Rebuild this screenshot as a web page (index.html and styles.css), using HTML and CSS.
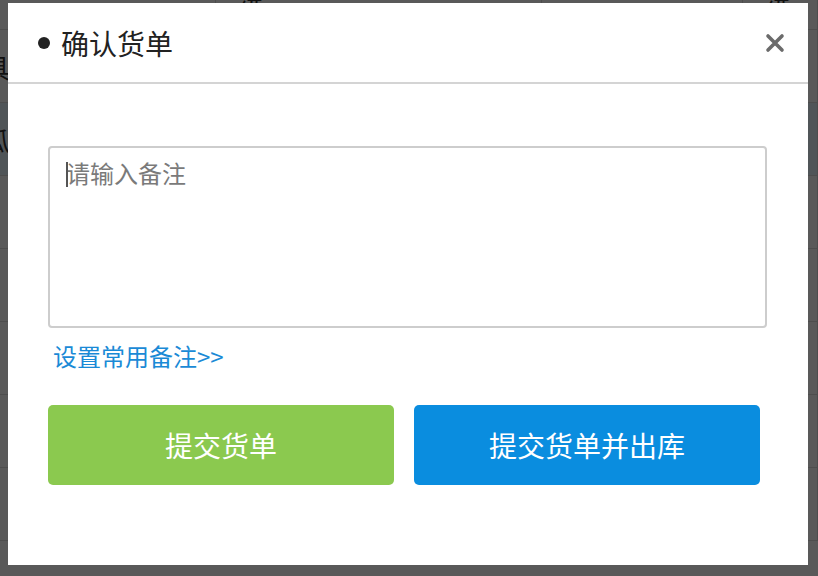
FILE: index.html
```html
<!DOCTYPE html>
<html>

<head>
  <meta charset="UTF-8">
  <meta name="viewport" content="width=device-width, initial-scale=1.0">
  <link rel="stylesheet" href="styles.css">
</head>

<body>
  <!-- 背景中的货单列表 -->
  <table class="list-table">
    <tr class="row-head">
      <td></td>
      <td class="cut">况</td>
      <td></td>
      <td class="cut">况</td>
    </tr>
    <tr>
      <td class="edge">具</td>
      <td></td>
      <td></td>
      <td></td>
    </tr>
    <tr class="row-active">
      <td class="edge">瓜</td>
      <td></td>
      <td></td>
      <td></td>
    </tr>
    <tr><td></td><td></td><td></td><td></td></tr>
    <tr><td></td><td></td><td></td><td></td></tr>
    <tr><td></td><td></td><td></td><td></td></tr>
    <tr><td></td><td></td><td></td><td></td></tr>
    <tr><td></td><td></td><td></td><td></td></tr>
  </table>

  <div class="mask"></div>

  <div class="dialog">
    <div class="dialog-header">
      <h3 class="dialog-title"><span class="dot"></span>确认货单</h3>
      <a class="dialog-close" href="#">
        <svg width="20" height="20" viewBox="0 0 20 20">
          <path d="M3 3 L17 17 M17 3 L3 17" stroke="#6b6b6b" stroke-width="3.6" stroke-linecap="round" fill="none"/>
        </svg>
      </a>
    </div>
    <div class="dialog-body">
      <div class="remark-box">
        <textarea class="remark" placeholder="请输入备注"></textarea>
        <span class="caret"></span>
      </div>
      <a class="remark-link" href="#">设置常用备注&gt;&gt;</a>
      <div class="btn-row">
        <button class="btn btn-green">提交货单</button>
        <button class="btn btn-blue">提交货单并出库</button>
      </div>
    </div>
  </div>
</body>

</html>
```

FILE: styles.css
```css
/* 基础 */
body {
  margin: 0;
  overflow: hidden;
  background: #fff;
  font-family: "Noto Sans CJK SC", "Noto Sans", sans-serif;
}

/* 背景列表 */
.list-table {
  border-collapse: collapse;
  width: 818px;
  table-layout: fixed;
  color: #333;
  font-size: 26px;
}

.list-table td {
  height: 72px;
  padding: 0;
  border-bottom: 1px solid #dcdcdc;
  border-right: 1px solid #dcdcdc;
  vertical-align: middle;
}

.list-table td:nth-child(1) { width: 215px; }
.list-table td:nth-child(2) { width: 303px; }
.list-table td:nth-child(3) { width: 200px; }

.list-table .row-head td {
  height: 29px;
  vertical-align: top;
  line-height: 0;
}

.list-table .cut {
  padding-left: 22px;
}

.list-table .edge {
  text-indent: -16px;
}

.list-table .row-active td {
  background: #e4f2fc;
}

.mask {
  position: fixed;
  inset: 0;
  background: rgba(0, 0, 0, 0.65);
}

/* 弹窗 */
.dialog {
  position: fixed;
  left: 8px;
  top: 3px;
  width: 800px;
  height: 562px;
  background: #fff;
}

.dialog-header {
  height: 79px;
  border-bottom: 2px solid #d4d4d4;
  display: flex;
  align-items: center;
  justify-content: space-between;
  padding: 0 23px 0 30px;
}

.dialog-title {
  margin: 0;
  display: flex;
  align-items: center;
  font-size: 28px;
  font-weight: normal;
  color: #222;
}

.dot {
  width: 12px;
  height: 12px;
  border-radius: 50%;
  background: #222;
  margin-right: 11px;
}

.dialog-close {
  display: flex;
  width: 20px;
  height: 20px;
}

.dialog-body {
  padding: 62px 41px 0 40px;
}

.remark-box {
  position: relative;
}

.remark {
  display: block;
  box-sizing: border-box;
  width: 100%;
  height: 182px;
  border: 2px solid #cdcdcd;
  border-radius: 4px;
  padding: 10px 16px;
  resize: none;
  outline: none;
  font-family: inherit;
  font-size: 24px;
  line-height: 30px;
  color: #333;
}

.remark::placeholder {
  color: #7a7a7a;
}

.caret {
  position: absolute;
  left: 18px;
  top: 16px;
  width: 2px;
  height: 25px;
  background: #555;
}

.remark-link {
  display: block;
  margin-top: 11px;
  padding-left: 5px;
  font-size: 24px;
  line-height: 34px;
  color: #1a8ad6;
  text-decoration: none;
}

.btn-row {
  display: flex;
  gap: 20px;
  margin-top: 32px;
}

.btn {
  width: 346px;
  height: 80px;
  border: none;
  border-radius: 5px;
  color: #fff;
  font-family: inherit;
  font-size: 28px;
  cursor: pointer;
}

.btn-green {
  background-color: #8bc94f;
}

.btn-blue {
  background-color: #0a8ddf;
}
```
